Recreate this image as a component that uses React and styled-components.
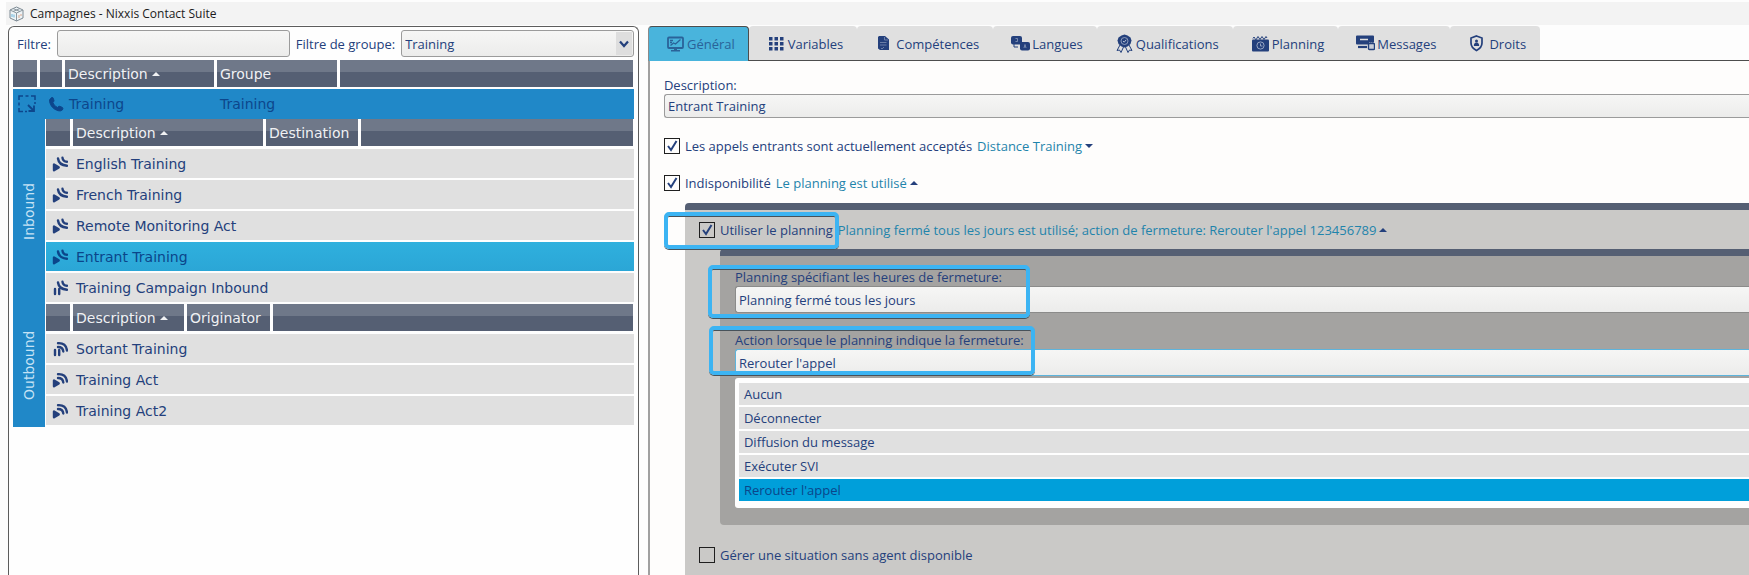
import { useState } from "react";
import styled, { createGlobalStyle, css } from "styled-components";

const inbound = [
  { name: "English Training", icon: "actIn" },
  { name: "French Training", icon: "actIn" },
  { name: "Remote Monitoring Act", icon: "actIn" },
  { name: "Entrant Training", icon: "actIn" },
  { name: "Training Campaign Inbound", icon: "campIn" },
];

const outbound = [
  { name: "Sortant Training", icon: "campOut" },
  { name: "Training Act", icon: "actOut" },
  { name: "Training Act2", icon: "actOut" },
];

const closingActions = [
  "Aucun",
  "Déconnecter",
  "Diffusion du message",
  "Exécuter SVI",
  "Rerouter l'appel",
];

const Play = () => <path d="M2 8.600v5.600l4.700-2.800z" fill="currentColor" strokeLinejoin="round" strokeWidth="2.400" />;
const Pause = () => <path d="M3 9v5M7.200 9v5" />;
const WavesIn = () => <path d="M6 2.500q.8 6.500 9 7.300M10.500 1.800q.5 3.700 4.500 4" />;
const WavesOut = () => <path d="M6 2.200q8-.5 9 7.300M6 6q5 0 5.300 4.500" />;

const ActivityIcon = ({ kind }) => (
  <RowSvg viewBox="0 0 16 16" aria-hidden="true">
    {kind.startsWith("act") ? <Play /> : <Pause />}
    {kind.endsWith("In") ? <WavesIn /> : <WavesOut />}
  </RowSvg>
);

const tabs = [
  {
    label: "Général",
    icon: (
      <>
        <rect x="2" y="2.500" width="15" height="10.500" rx="1" fill="none" stroke="currentColor" strokeWidth="1.800" />
        <path d="M4.500 10.500l3-2.500 2 1 5-4.500M4 5.500h3M4 7.500h2" fill="none" stroke="currentColor" strokeWidth="1.300" />
        <path d="M8 13h3v2h3v1.500H5V15h3z" />
      </>
    ),
  },
  {
    label: "Variables",
    icon: (
      <path d="M2 3h3.500v3.500H2zM7.500 3H11v3.500H7.500zM13 3h3.500v3.500H13zM2 8h3.500v3.500H2zM7.500 8H11v3.500H7.500zM13 8h3.500v3.500H13zM2 13h3.500v3.500H2zM7.500 13H11v3.500H7.500zM13 13h3.500v3.500H13z" />
    ),
  },
  {
    label: "Compétences",
    icon: (
      <>
        <path d="M4 2h6l4 3.500V16H5L3 14.500V3z" />
        <path d="M5 8.500h6.500M5 11h6.500M6 14l1 1 2-2" stroke="#7d8eb3" strokeWidth=".8" fill="none" />
        <path d="M9.500 3v3H13" stroke="#7d8eb3" strokeWidth=".8" fill="none" />
      </>
    ),
  },
  {
    label: "Langues",
    icon: (
      <>
        <rect x="0" y="2" width="11" height="8.500" rx="2" />
        <rect x="9" y="8" width="10" height="8.500" rx="2" />
        <path d="M4.500 4.500h2v3h-2M13 14l1-3.500 1 3.500" stroke="#8d9cbb" strokeWidth=".8" fill="none" />
        <path d="M3 10v3h4" stroke="currentColor" fill="none" />
      </>
    ),
  },
  {
    label: "Qualifications",
    icon: (
      <>
        <path d="M9.500.5l3 1 3 2 1 3-1 3.500-3 2.500-3 1-3-1-3-2.500-1-3.500 1-3 3-2z" />
        <path d="M5 11l-3 5.500 2.500-.5L6 18.500l2.500-5.500M14 11l3 5.500-2.500-.5-1.500 2.500-2.500-5.500" fill="none" stroke="currentColor" />
        <circle cx="9.500" cy="7" r="3.500" fill="none" stroke="#a3afc8" strokeWidth=".8" />
        <path d="M8 7l1.200 1.200 2-2.400" fill="none" stroke="#c5ccda" strokeWidth=".9" />
      </>
    ),
  },
  {
    label: "Planning",
    icon: (
      <>
        <rect x="1" y="5.500" width="17" height="12" rx="1" />
        <path d="M2 4.500q1-3 2 0t2-.5q1-3 2 0t2 0q1-3 2 0t2 0q1-3 2 0" fill="none" stroke="currentColor" />
        <circle cx="9.500" cy="11.500" r="3.600" fill="none" stroke="#a3afc8" strokeWidth=".9" />
        <path d="M9.500 9.500v2.500h2" fill="none" stroke="#a3afc8" strokeWidth=".9" />
      </>
    ),
  },
  {
    label: "Messages",
    icon: (
      <>
        <path d="M1 1.500h16q1 0 1 1V8h-5v2.500H1q-1 0-1-1v-7q0-1 1-1z" />
        <path d="M4 5.500h8" stroke="#e0e0e0" strokeWidth="1.500" />
        <path d="M2 13h9" stroke="currentColor" strokeWidth="2.200" />
        <rect x="12.500" y="9.500" width="6" height="6" rx="1" fill="#c8cdd8" stroke="currentColor" strokeWidth="1.400" />
        <path d="M14 9.500V8h3v1.500" stroke="currentColor" fill="none" />
      </>
    ),
  },
  {
    label: "Droits",
    icon: (
      <>
        <path d="M8.500 2l5.500 2v5q0 4.500-5.500 7.500Q3 13.500 3 9V4z" fill="none" stroke="currentColor" strokeWidth="1.700" />
        <circle cx="8.500" cy="7" r="1.500" />
        <path d="M5.800 12q0-3.500 2.700-3.500t2.700 3.500z" />
      </>
    ),
  },
];

const Caret = ({ up }) => (
  <CaretSvg viewBox="0 0 8 8" aria-hidden="true">
    <path d={up ? "M0 6L4 2l4 4z" : "M0 2l4 4 4-4z"} fill="currentColor" />
  </CaretSvg>
);

const GroupTable = ({ columns, second, items, current, onSelect }) => (
  <Table>
    <thead>
      <HeadRow columns={columns}>
        <HeadCell />
        <HeadCell>
          <SortButton type="button">
            Description <Caret up />
          </SortButton>
        </HeadCell>
        <HeadCell>{second}</HeadCell>
        <HeadCell />
      </HeadRow>
    </thead>
    <tbody>
      {items.map((item) => (
        <ItemRow
          key={item.name}
          $selected={item.name === current}
          onClick={() => onSelect(item.name)}
        >
          <td>
            <ActivityIcon kind={item.icon} />
          </td>
          <td>{item.name}</td>
        </ItemRow>
      ))}
    </tbody>
  </Table>
);

const Check = ({ id, children, defaultChecked }) => (
  <>
    <CheckBox type="checkbox" id={id} defaultChecked={defaultChecked} />
    <label htmlFor={id}>{children}</label>
  </>
);

const App = () => {
  const [current, setCurrent] = useState("Entrant Training");
  const [action, setAction] = useState("Rerouter l'appel");

  return (
    <Window>
      <GlobalStyle />
      <TitleBar>
        <svg width="15" height="16" viewBox="0 0 15 16" fill="none" aria-hidden="true">
          <path d="M7.500 1L14 4v8l-6.500 3L1 12V4z" fill="#eef3f6" stroke="#7d8a94" />
          <path d="M1 4l6.500 3L14 4M7.500 7v8M4 2.500l7 3M11 2.500l-7 3" stroke="#8a979f" />
          <path d="M3 8v3M5 8.500v3" stroke="#6bb6dd" />
          <path d="M10 9v3M12 8v2" stroke="#d9a58c" />
        </svg>
        <h1>Campagnes - Nixxis Contact Suite</h1>
      </TitleBar>
      <Panes>
        <TreePane>
          <FilterBar>
            <label htmlFor="filter">Filtre:</label>
            <Field id="filter" />
            <label htmlFor="group">Filtre de groupe:</label>
            <SelectWrap>
              <Select id="group" defaultValue="Training">
                <option>Training</option>
              </Select>
              <DropMark>
                <svg width="10" height="8" viewBox="0 0 10 8" aria-hidden="true">
                  <path d="M1 1.500l4 4.500 4-4.500" fill="none" stroke="currentColor" strokeWidth="2.200" />
                </svg>
              </DropMark>
            </SelectWrap>
          </FilterBar>
          <Table>
            <thead>
              <HeadRow columns="24px 22px 149px 120px 1fr">
                <HeadCell />
                <HeadCell />
                <HeadCell>
                  <SortButton type="button">
                    Description <Caret up />
                  </SortButton>
                </HeadCell>
                <HeadCell>Groupe</HeadCell>
                <HeadCell />
              </HeadRow>
            </thead>
            <tbody>
              <CampaignRow>
                <td>
                  <svg width="18" height="18" viewBox="0 0 18 18" fill="none" stroke="currentColor" aria-hidden="true">
                    <path d="M1 5V1h4M7.500 1h3M13 1h4v4M1 7.500v3M1 13v3.500h4M7 16.500h2M17 7v2" strokeWidth="1.500" />
                    <path d="M10 10l5 5M16 10.500V16h-5.500" strokeWidth="1.800" />
                  </svg>
                </td>
                <td>
                  <svg width="15" height="15" viewBox="0 0 15 15" aria-hidden="true">
                    <path
                      d="M1.500 1.500Q2.500 0 4 .8l1 2.700Q5 5 3.800 5.500q1.200 3.500 4.700 5 .8-1.500 2.300-1.200l2.700 1.200q1 1.200-.2 2.500-1.800 1.500-4.300.7Q2 11.500.5 4.500.3 2.700 1.500 1.500z"
                      fill="currentColor"
                      stroke="currentColor"
                    />
                  </svg>
                </td>
                <td>Training</td>
                <td>Training</td>
              </CampaignRow>
            </tbody>
          </Table>
          <Group>
            <GroupName>Inbound</GroupName>
            <GroupTable
              columns="24px 190px 92px 1fr"
              second="Destination"
              items={inbound}
              current={current}
              onSelect={setCurrent}
            />
          </Group>
          <Group>
            <GroupName>Outbound</GroupName>
            <GroupTable
              columns="24px 111px 83px 1fr"
              second="Originator"
              items={outbound}
              current={current}
              onSelect={setCurrent}
            />
          </Group>
        </TreePane>

        <DetailPane>
          <TabBar role="tablist">
            {tabs.map((tab, i) => (
              <Tab key={tab.label} type="button" role="tab" aria-selected={i === 0} $active={i === 0}>
                <TabSvg viewBox="0 0 19 19" aria-hidden="true">
                  {tab.icon}
                </TabSvg>
                {tab.label}
              </Tab>
            ))}
          </TabBar>
          <TabBody>
            <FormLabel htmlFor="description">Description:</FormLabel>
            <Field id="description" $flush defaultValue="Entrant Training" />
            <CheckLine>
              <Check id="accepted" defaultChecked>
                Les appels entrants sont actuellement acceptés
              </Check>
              <DetailLink href="#distance">
                Distance Training <Caret />
              </DetailLink>
            </CheckLine>
            <CheckLine>
              <Check id="unavailable" defaultChecked>
                Indisponibilité
              </Check>
              <DetailLink href="#unavailable">
                Le planning est utilisé <Caret up />
              </DetailLink>
            </CheckLine>
            <Section>
              <SectionLine>
                <Check id="use-planning" defaultChecked>
                  Utiliser le planning
                </Check>
                <DetailLink href="#planning">
                  Planning fermé tous les jours est utilisé; action de fermeture: Rerouter l'appel 123456789
                  <Caret up />
                </DetailLink>
                <CheckMarker />
              </SectionLine>
              <SubSection>
                <FormGroup>
                  <FormLabel htmlFor="planning">Planning spécifiant les heures de fermeture:</FormLabel>
                  <Select id="planning" $flush defaultValue="Planning fermé tous les jours">
                    <option>Planning fermé tous les jours</option>
                  </Select>
                  <PlanningMarker />
                </FormGroup>
                <FormGroup>
                  <FormLabel htmlFor="action">Action lorsque le planning indique la fermeture:</FormLabel>
                  <Select
                    id="action"
                    $flush
                    $open
                    value={action}
                    onChange={(e) => setAction(e.target.value)}
                  >
                    {closingActions.map((name) => (
                      <option key={name}>{name}</option>
                    ))}
                  </Select>
                  <ActionMarker />
                </FormGroup>
                <OptionList role="listbox" aria-label="Action">
                  {closingActions.map((name) => (
                    <Option
                      key={name}
                      role="option"
                      aria-selected={name === action}
                      $selected={name === action}
                      onClick={() => setAction(name)}
                    >
                      {name}
                    </Option>
                  ))}
                </OptionList>
              </SubSection>
              <SectionLine>
                <Check id="no-agent">Gérer une situation sans agent disponible</Check>
              </SectionLine>
            </Section>
          </TabBody>
        </DetailPane>
      </Panes>
    </Window>
  );
};

export default App;

const GlobalStyle = createGlobalStyle`
  * {
    box-sizing: border-box;
  }

  body {
    margin: 0;
    background-color: #fdfdfd;
    color: #24407c;
    font-family: "Open Sans", "Noto Sans", sans-serif;
    font-size: 13px;
    line-height: 18px;
  }

  button, input, select {
    font: inherit;
    color: inherit;
  }
`;

const Window = styled.div`
  display: flex;
  flex-direction: column;
  height: 100vh;
  overflow: hidden;
`;

const TitleBar = styled.header`
  display: flex;
  flex: none;
  align-items: center;
  gap: 6px;
  height: 23px;
  margin: 2px 0 1px 6px;
  padding-left: 3px;
  background-color: #f3f3f3;
  color: #1b1b1b;

  h1 {
    margin: 0;
    font-size: 12px;
    font-weight: 400;
  }
`;

const Panes = styled.main`
  display: grid;
  flex: 1;
  grid-template-columns: minmax(0, 51fr) minmax(0, 89fr);
  gap: 9px;
  min-height: 0;
  padding-left: 8px;
`;

const TreePane = styled.section`
  padding: 3px 4px;
  border: 1px solid #5c5c5c;
  border-bottom: none;
  border-radius: 6px 6px 0 0;
  background-color: #fefefe;
`;

const fieldLook = css`
  min-width: 0;
  height: 27px;
  padding: 0 3px;
  border: 1px solid #9b9b9b;
  border-radius: 3px;
  background: linear-gradient(#f6f6f5, #ececeb);
  outline: none;
`;

const FilterBar = styled.div`
  display: flex;
  align-items: center;
  gap: 6px;
  margin-bottom: 3px;
  padding-left: 4px;

  label {
    flex: none;
  }
`;

const Field = styled.input`
  ${fieldLook}
  flex: 1 1 40px;

  ${(props) =>
    props.$flush &&
    css`
      display: block;
      flex: none;
      width: 100%;
      height: 24px;
      border-right: none;
      border-radius: 3px 0 0 3px;
    `}
`;

const Select = styled.select`
  ${fieldLook}
  display: block;
  width: 100%;
  appearance: none;

  ${(props) =>
    props.$flush &&
    css`
      border-color: ${props.$open ? "#5db4dc" : "#8b8b8a"};
      border-right: none;
      border-radius: 3px 0 0 3px;
    `}
`;

const SelectWrap = styled.div`
  position: relative;
  flex: 1 1 40px;
`;

const DropMark = styled.span`
  position: absolute;
  top: 2px;
  right: 2px;
  bottom: 2px;
  display: flex;
  align-items: center;
  justify-content: center;
  width: 16px;
  background-color: #dedede;
  pointer-events: none;
`;

const Table = styled.table`
  display: block;
  flex: 1;
  min-width: 0;
  font-family: "DejaVu Sans", Verdana, sans-serif;
  font-size: 14px;

  thead, tbody {
    display: block;
  }
`;

const HeadRow = styled.tr`
  display: grid;
  grid-template-columns: ${(props) => props.columns};
  gap: 3px;
  height: 29px;
  padding: 0 1px 2px 0;
`;

const HeadCell = styled.th`
  display: flex;
  align-items: center;
  padding: 0 3px;
  background: linear-gradient(#6f7889 45%, #555f73 45%);
  color: #f0f1f3;
  font-weight: 400;
`;

const SortButton = styled.button`
  display: flex;
  align-items: center;
  gap: 4px;
  padding: 0;
  border: none;
  background: none;
`;

const CaretSvg = styled.svg`
  flex: none;
  width: 8px;
  height: 8px;
`;

const CampaignRow = styled.tr`
  display: grid;
  grid-template-columns: 31px 20px 151px 1fr;
  align-items: center;
  height: 30px;
  padding-left: 5px;
  background-color: #2088c8;
  color: #0d468c;

  td {
    padding: 0;
  }

  svg {
    display: block;
  }
`;

const ItemRow = styled.tr`
  display: grid;
  grid-template-columns: 24px 1fr;
  align-items: center;
  height: 29px;
  margin-bottom: 2px;
  padding-left: 6px;
  background: ${(props) => (props.$selected ? "linear-gradient(#2fb0de, #2ba6d6)" : "#e0e0e0")};
  color: ${(props) => (props.$selected ? "#0b458a" : "#24407c")};

  td {
    padding: 0;
  }
`;

const RowSvg = styled.svg`
  display: block;
  width: 16px;
  height: 16px;
  fill: none;
  stroke: currentColor;
  stroke-linecap: round;
  stroke-width: 2.4;
`;

const Group = styled.div`
  display: flex;
  gap: 1px;

  tbody {
    padding-top: 1px;
  }
`;

const GroupName = styled.div`
  display: flex;
  align-items: center;
  justify-content: center;
  width: 32px;
  background-color: #2088c8;
  color: #c5e2f5;
  font-family: "DejaVu Sans", Verdana, sans-serif;
  font-size: 14px;
  writing-mode: vertical-rl;
  transform: rotate(180deg);
`;

const DetailPane = styled.section`
  display: flex;
  flex-direction: column;
  min-width: 0;
`;

const TabBar = styled.div`
  display: flex;
  flex: none;
  height: 35px;
  border-bottom: 1px solid #4d4d4d;
`;

const Tab = styled.button`
  display: flex;
  align-items: center;
  height: 34px;
  padding: 0 13px 0 17px;
  border: 1px solid transparent;
  border-bottom: none;
  border-radius: 4px 4px 0 0;
  background-color: #e0e0e0;
  white-space: nowrap;

  ${(props) =>
    props.$active &&
    css`
      height: 35px;
      border-color: #4d4d4d;
      border-left-color: #8a8a8a;
      background-color: #49b4dc;
      color: #2a6399;
    `}
`;

const TabSvg = styled.svg`
  flex: none;
  width: 19px;
  height: 19px;
  margin-right: 2px;
  fill: currentColor;
`;

const TabBody = styled.div`
  display: flex;
  flex: 1;
  flex-direction: column;
  min-height: 0;
  padding: 15px 0 0 14px;
  border-left: 2px solid #a0a0a0;
  background-color: #fefdfc;
`;

const FormLabel = styled.label`
  display: block;
`;

const CheckLine = styled.div`
  display: flex;
  flex: none;
  align-items: center;
  gap: 5px;
  height: 18px;
  margin-top: 19px;
  white-space: nowrap;
`;

const CheckBox = styled.input`
  flex: none;
  width: 16px;
  height: 16px;
  margin: 0;
  border: 1px solid #1f1f1f;
  background-color: transparent;
  appearance: none;

  &:checked {
    background: center / 12px 12px no-repeat
      url("data:image/svg+xml,%3Csvg xmlns='http://www.w3.org/2000/svg' viewBox='0 0 12 12'%3E%3Cpath d='M2 6l3 4 5.500-9' fill='none' stroke='%2324407c' stroke-width='2'/%3E%3C/svg%3E");
  }
`;

const DetailLink = styled.a`
  display: flex;
  align-items: center;
  gap: 3px;
  color: #1f84ab;
  text-decoration: none;

  svg {
    color: #24407c;
  }
`;

const Section = styled.div`
  flex: 1;
  margin: 11px 0 0 21px;
  border-top: 7px solid #555f73;
  border-radius: 4px 0 0 0;
  background-color: #cac9c7;
`;

const SectionLine = styled.div`
  position: relative;
  display: flex;
  align-items: center;
  gap: 5px;
  height: 39px;
  padding-left: 14px;
  white-space: nowrap;
`;

const SubSection = styled.div`
  margin: 0 0 10px 35px;
  padding: 12px 0 17px 15px;
  border-top: 7px solid #555f73;
  border-radius: 4px 0 0 4px;
  background-color: #a4a3a1;
`;

const FormGroup = styled.div`
  position: relative;

  & + & {
    margin-top: 18px;
  }
`;

const OptionList = styled.ul`
  margin: 2px 0 0;
  padding: 5px 0 7px 4px;
  border-radius: 3px 0 0 3px;
  background-color: #fefefe;
  list-style: none;
`;

const Option = styled.li`
  height: 22px;
  padding-left: 5px;
  background-color: ${(props) => (props.$selected ? "#009fda" : "#e0e0e0")};
  color: ${(props) => (props.$selected ? "#0b458a" : "#24407c")};
  line-height: 22px;

  & + & {
    margin-top: 2px;
  }
`;

/* highlight frames drawn over the form */
const Marker = styled.span`
  position: absolute;
  border: 4px solid #3cb4f3;
  border-radius: 5px;
  box-shadow: 0 1px 0 #47525a, inset 0 1px 0 #47525a;
  pointer-events: none;
`;

const CheckMarker = styled(Marker)`
  top: 2px;
  left: -21px;
  width: 175px;
  height: 37px;
`;

const PlanningMarker = styled(Marker)`
  top: -3px;
  left: -27px;
  width: 322px;
  height: 53px;
`;

const ActionMarker = styled(Marker)`
  top: -5px;
  left: -26px;
  width: 326px;
  height: 49px;
`;
